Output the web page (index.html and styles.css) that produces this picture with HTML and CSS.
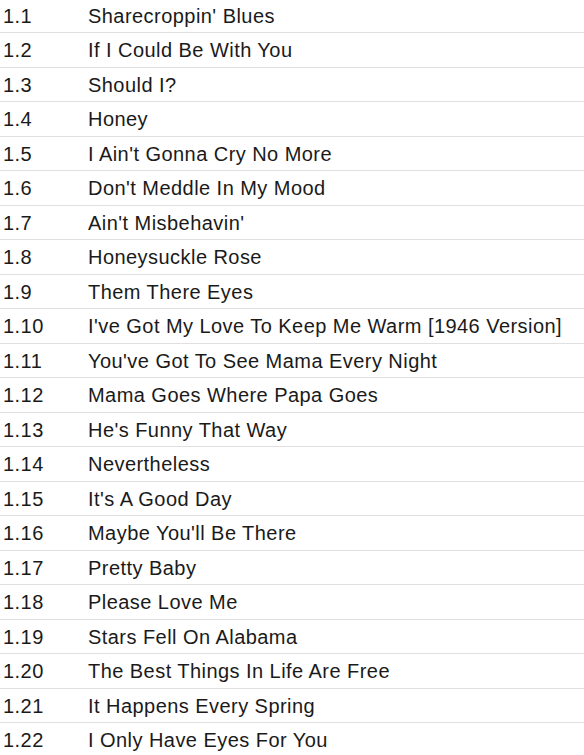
FILE: index.html
```html
<!DOCTYPE html>
<html lang="en">
<head>
<meta charset="utf-8"/>
<meta content="width=device-width, initial-scale=1" name="viewport"/>
<title>Tracklist</title>
<link rel="stylesheet" href="styles.css">
</head>
<body>
<table class="tracklist">
<tbody>
<tr><td class="num">1.1</td><td class="title">Sharecroppin' Blues</td></tr>
<tr><td class="num">1.2</td><td class="title">If I Could Be With You</td></tr>
<tr><td class="num">1.3</td><td class="title">Should I?</td></tr>
<tr><td class="num">1.4</td><td class="title">Honey</td></tr>
<tr><td class="num">1.5</td><td class="title">I Ain't Gonna Cry No More</td></tr>
<tr><td class="num">1.6</td><td class="title">Don't Meddle In My Mood</td></tr>
<tr><td class="num">1.7</td><td class="title">Ain't Misbehavin'</td></tr>
<tr><td class="num">1.8</td><td class="title">Honeysuckle Rose</td></tr>
<tr><td class="num">1.9</td><td class="title">Them There Eyes</td></tr>
<tr><td class="num">1.10</td><td class="title">I've Got My Love To Keep Me Warm [1946 Version]</td></tr>
<tr><td class="num">1.11</td><td class="title">You've Got To See Mama Every Night</td></tr>
<tr><td class="num">1.12</td><td class="title">Mama Goes Where Papa Goes</td></tr>
<tr><td class="num">1.13</td><td class="title">He's Funny That Way</td></tr>
<tr><td class="num">1.14</td><td class="title">Nevertheless</td></tr>
<tr><td class="num">1.15</td><td class="title">It's A Good Day</td></tr>
<tr><td class="num">1.16</td><td class="title">Maybe You'll Be There</td></tr>
<tr><td class="num">1.17</td><td class="title">Pretty Baby</td></tr>
<tr><td class="num">1.18</td><td class="title">Please Love Me</td></tr>
<tr><td class="num">1.19</td><td class="title">Stars Fell On Alabama</td></tr>
<tr><td class="num">1.20</td><td class="title">The Best Things In Life Are Free</td></tr>
<tr><td class="num">1.21</td><td class="title">It Happens Every Spring</td></tr>
<tr><td class="num">1.22</td><td class="title">I Only Have Eyes For You</td></tr>
</tbody>
</table>
</body>
</html>
```

FILE: styles.css
```css
body {
  margin: 0;
  background: #fff;
  font-family: "Liberation Sans", Arial, sans-serif;
  color: #1a1a1a;
}
.tracklist {
  width: 100%;
  margin-top: -1.5px;
  border-collapse: collapse;
  font-size: 20px;
  line-height: 23px;
  letter-spacing: 0.45px;
}
.tracklist td {
  padding: 6px 3px 4.5px;
  border-bottom: 1px solid #e0e0e0;
  text-align: left;
  white-space: nowrap;
}
.tracklist td.num {
  width: 79px;
}
```
